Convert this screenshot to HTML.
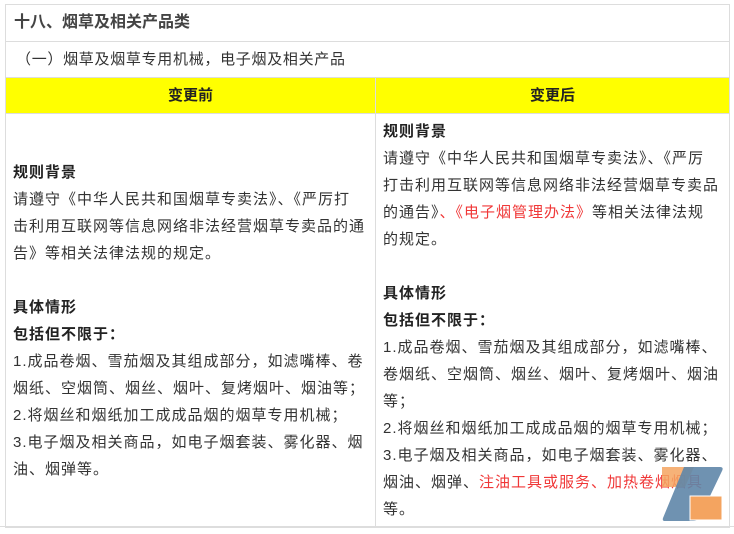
<!DOCTYPE html>
<html><head><meta charset="utf-8"><style>
body{margin:0;background:#fff;font-family:"Liberation Sans","Noto Sans CJK SC",sans-serif;color:#333;font-size:15px;}
.w{position:absolute;left:5px;top:4px;width:723px;height:523px;border-left:1px solid #ddd;border-right:1px solid #ddd;border-top:1px solid #ddd;}
.row{position:absolute;left:0;width:723px;border-bottom:1px solid #ddd;box-sizing:border-box;}
.t{top:0;height:37px;line-height:36px;font-size:16px;font-weight:bold;color:#444;padding-left:8px;}
.s{top:37px;height:36px;line-height:36px;padding-left:10px;letter-spacing:0.7px}
.y{top:73px;height:36px;background:#ff0;line-height:35px;font-weight:bold;color:#222;}
.y div{position:absolute;top:0;width:369px;text-align:center;}
.c{top:109px;height:414px;}
.div{position:absolute;left:369px;top:73px;width:1px;height:450px;background:#ddd;}
.col{position:absolute;line-height:27px;white-space:nowrap;letter-spacing:1px}
.b{font-weight:bold;color:#222}
.r{color:#f03838}
.bot{position:absolute;left:0;top:526px;width:734px;height:1px;background:#ddd}
</style></head><body>
<div class="w">
<div class="row t">十八、烟草及相关产品类</div>
<div class="row s">（一）烟草及烟草专用机械，电子烟及相关产品</div>
<div class="row y"><div style="left:0">变更前</div><div style="left:370px;width:353px">变更后</div></div>
<div class="row c"></div>
<div class="div"></div>
<div class="col" style="left:7px;top:154px;width:358px">
<div class="b">规则背景</div>
<div>请遵守《中华人民共和国烟草专卖法》、《严厉打<br>击利用互联网等信息网络非法经营烟草专卖品的通<br>告》等相关法律法规的规定。</div>
<div>&nbsp;</div>
<div class="b">具体情形</div>
<div class="b">包括但不限于：</div>
<div>1.成品卷烟、雪茄烟及其组成部分，如滤嘴棒、卷<br>烟纸、空烟筒、烟丝、烟叶、复烤烟叶、烟油等；</div>
<div>2.将烟丝和烟纸加工成成品烟的烟草专用机械；</div>
<div>3.电子烟及相关商品，如电子烟套装、雾化器、烟<br>油、烟弹等。</div>
</div>
<div class="col" style="left:377px;top:113px;width:342px">
<div class="b">规则背景</div>
<div>请遵守《中华人民共和国烟草专卖法》、《严厉<br>打击利用互联网等信息网络非法经营烟草专卖品<br>的通告》<span class="r">、《电子烟管理办法》</span>等相关法律法规<br>的规定。</div>
<div>&nbsp;</div>
<div class="b">具体情形</div>
<div class="b">包括但不限于：</div>
<div>1.成品卷烟、雪茄烟及其组成部分，如滤嘴棒、<br>卷烟纸、空烟筒、烟丝、烟叶、复烤烟叶、烟油<br>等；</div>
<div>2.将烟丝和烟纸加工成成品烟的烟草专用机械；</div>
<div>3.电子烟及相关商品，如电子烟套装、雾化器、<br>烟油、烟弹、<span class="r">注油工具或服务、加热卷烟烟具</span><br>等。</div>
</div>
</div>
<div class="bot"></div>
<svg style="position:absolute;left:655px;top:462px" width="75" height="64">
<path d="M7 5 H39 L30 25 H7 Z" fill="#f4a460" opacity="0.85"/>
<path d="M29 5 H65 Q69 5 67 9 L44 57 Q42 59 38 59 H10 Q7 59 8 56 Z" fill="#5f86a8" opacity="0.9"/>
<path d="M35 34 H67 V58 H35 Z" fill="#f4a460" stroke="#fff" stroke-width="1"/>
</svg>
</body></html>
